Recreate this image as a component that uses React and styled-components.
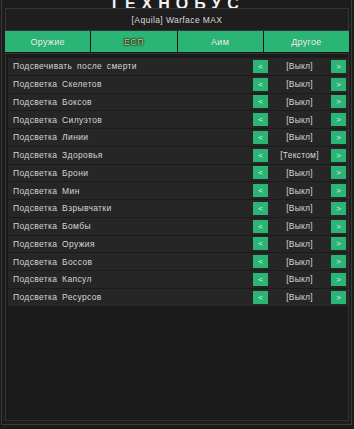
import React from "react";
import styled, { createGlobalStyle } from "styled-components";

const Global = createGlobalStyle`
  html, body { margin: 0; padding: 0; background: #1b1b1b; }
  body { font-family: "Liberation Sans", Arial, sans-serif; -webkit-font-smoothing: antialiased; }
  #root { width: 354px; height: 429px; overflow: hidden; }
`;

const Outer = styled.div`
  height: 429px;
  box-sizing: border-box;
  padding: 0 2px 4px 1px;
  display: flex;
`;

const Window = styled.div`
  flex: 1;
  display: flex;
  flex-direction: column;
  box-sizing: border-box;
  border: 1px solid #3b3b3b;
  border-top: none;
  background: #1c1c1c;
  padding: 0 2px 3px 3px;
`;

const Title = styled.div`
  height: 8px;
  overflow: hidden;
  display: flex;
  align-items: flex-end;
  justify-content: center;
  color: #f2f2f2;
  font-size: 16px;
  font-weight: bold;
  line-height: 9px;
  letter-spacing: 6px;
`;

const Header = styled.div`
  height: 23px;
  box-sizing: border-box;
  border: 1px solid #353535;
  background: #1e1e1e;
  display: flex;
  align-items: center;
  justify-content: center;
  color: #d8d8d8;
  font-size: 8.5px;
  letter-spacing: 0.4px;
`;

const Tabs = styled.div`
  display: grid;
  grid-template-columns: repeat(4, 1fr);
  gap: 1px;
  background: #161616;
  height: 21px;
  padding-bottom: 1px;
`;

const Tab = styled.div`
  background: #2bb574;
  display: flex;
  align-items: center;
  justify-content: center;
  font-size: 9px;
  letter-spacing: 0.3px;
  color: ${(p) => (p.$active ? "#d9c676" : "#f4f4f4")};
  text-shadow: ${(p) =>
    p.$active
      ? "0 0 1px #101010, 0 0 2px #101010, 0 0 2px #101010"
      : "0 0 1px rgba(0,0,0,0.25)"};
`;

const Panel = styled.div`
  flex: 1;
  box-sizing: border-box;
  border: 1px solid #333;
  background: #1b1b1b;
  padding: 4px 0 0 2px;
  display: flex;
  flex-direction: column;
  gap: 1px;
`;

const Row = styled.div`
  height: 16.75px;
  flex: 0 0 16.75px;
  background: #262626;
  display: flex;
  align-items: center;
  padding: 0 2px 0 5px;
  color: #d4d4d4;
  font-size: 8.5px;
  letter-spacing: 0.35px;
  word-spacing: 2px;
`;

const Label = styled.div`
  flex: 1;
  white-space: nowrap;
`;

const Arrow = styled.div`
  width: 15px;
  height: 13px;
  background: #2bb574;
  color: #e8f7ee;
  font-size: 8px;
  display: flex;
  align-items: center;
  justify-content: center;
  letter-spacing: 0;
`;

const Value = styled.div`
  width: 63px;
  text-align: center;
  color: #d8d8d8;
  letter-spacing: 0.2px;
  word-spacing: 0;
`;

const tabs = ["Оружие", "ЕСП", "Аим", "Другое"];

const rows = [
  ["Подсвечивать после смерти", "[Выкл]"],
  ["Подсветка Скелетов", "[Выкл]"],
  ["Подсветка Боксов", "[Выкл]"],
  ["Подсветка Силуэтов", "[Выкл]"],
  ["Подсветка Линии", "[Выкл]"],
  ["Подсветка Здоровья", "[Текстом]"],
  ["Подсветка Брони", "[Выкл]"],
  ["Подсветка Мин", "[Выкл]"],
  ["Подсветка Взрывчатки", "[Выкл]"],
  ["Подсветка Бомбы", "[Выкл]"],
  ["Подсветка Оружия", "[Выкл]"],
  ["Подсветка Боссов", "[Выкл]"],
  ["Подсветка Капсул", "[Выкл]"],
  ["Подсветка Ресурсов", "[Выкл]"],
];

export default function App() {
  return (
    <>
      <Global />
      <Outer>
        <Window>
          <Title>ТЕХНОБУС</Title>
          <Header>[Aquila] Warface MAX</Header>
          <Tabs>
            {tabs.map((t) => (
              <Tab key={t} $active={t === "ЕСП"}>
                {t}
              </Tab>
            ))}
          </Tabs>
          <Panel>
            {rows.map(([l, v]) => (
              <Row key={l}>
                <Label>{l}</Label>
                <Arrow>&lt;</Arrow>
                <Value>{v}</Value>
                <Arrow>&gt;</Arrow>
              </Row>
            ))}
          </Panel>
        </Window>
      </Outer>
    </>
  );
}
